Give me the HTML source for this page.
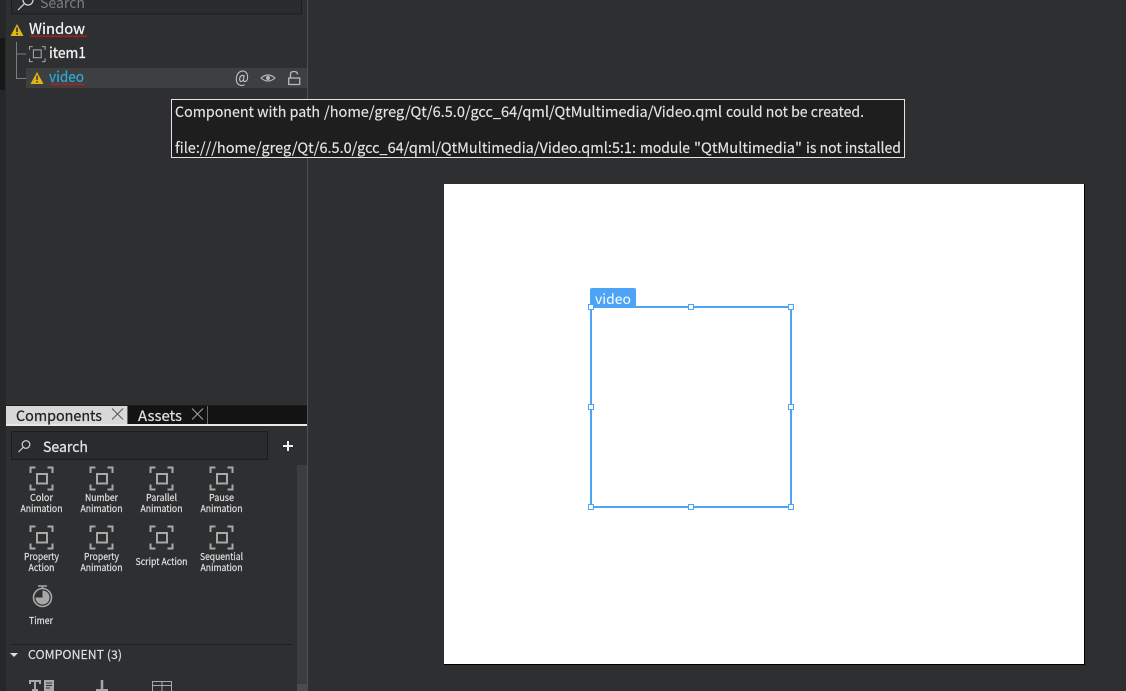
<!DOCTYPE html>
<html><head><meta charset="utf-8"><style>
html,body{margin:0;padding:0;background:#2e2f31;width:1126px;height:691px;overflow:hidden}
svg{display:block}
text{font-family:"Noto Sans CJK JP","Liberation Sans",sans-serif;white-space:pre}
.c{font-size:9.5px;fill:#e4e4e4;text-anchor:middle;stroke:#e4e4e4;stroke-width:.15px}
.b{stroke-width:.25px}
</style></head><body>
<svg width="1126" height="691" viewBox="0 0 1126 691" xmlns="http://www.w3.org/2000/svg">
<defs>
<g id="ic" fill="none" stroke="#a8a8a8" stroke-width="2">
<path d="M1 6.500V1H6M18 1H23V6.500M1 18V23H6M18 23H23V18"/>
<rect x="7.500" y="7.500" width="10" height="9.500" stroke-width="2"/>
</g>
<path id="warn" d="M6.500 0L13 12H0Z" fill="#e3b512"/>
</defs>
<rect width="1126" height="691" fill="#2e2f31"/>
<rect x="0" y="0" width="6" height="691" fill="#262728"/>
<rect x="0" y="38" width="5" height="52" fill="#171717"/>
<rect x="307" y="0" width="1" height="691" fill="#505153"/>

<!-- top search -->
<rect x="11.500" y="-10" width="290" height="24" fill="#2a2b2d" stroke="#1c1d1e"/>
<circle cx="28" cy="0" r="5" fill="none" stroke="#dcdcdc" stroke-width="1.200"/>
<path d="M24 4L18 10" stroke="#dcdcdc" stroke-width="1.200"/>
<text x="40" y="8" font-size="14.500" fill="#7d7e80" textLength="45" lengthAdjust="spacingAndGlyphs">Search</text>

<!-- tree -->
<rect x="26" y="68" width="281" height="20" fill="#3e3f41"/>
<use href="#warn" x="10.500" y="24"/><rect x="16.200" y="27.500" width="1.600" height="4.500" fill="#2e2f31"/><rect x="16.200" y="33" width="1.600" height="1.600" fill="#2e2f31"/>
<text x="29" y="34" font-size="15" fill="#f4f4f4" stroke="#f4f4f4" class="b" textLength="56" lengthAdjust="spacingAndGlyphs">Window</text>
<path d="M30 37l1.500 -1.500 1.500 1.500 1.500 -1.500 1.500 1.500 1.500 -1.500 1.500 1.500 1.500 -1.500 1.500 1.500 1.500 -1.500 1.500 1.500 1.500 -1.500 1.500 1.500 1.500 -1.500 1.500 1.500 1.500 -1.500 1.500 1.500 1.500 -1.500 1.500 1.500 1.500 -1.500 1.500 1.500 1.500 -1.500 1.500 1.500 1.500 -1.500 1.500 1.500 1.500 -1.500 1.500 1.500 1.500 -1.500 1.500 1.500 1.500 -1.500 1.500 1.500 1.500 -1.500 1.500 1.500 1.500 -1.500 1.500 1.500 1.500 -1.500 1.500 1.500 1.500 -1.500 1.500 1.500" fill="none" stroke="#c41c1c" stroke-width=".8"/>
<path d="M16.500 42V78.500H26M16.500 54H26" fill="none" stroke="#7c7d7f" stroke-width="1"/>
<g transform="translate(29.500,46) scale(.65)"><path d="M0 6V1H5M19 1H24V6M0 19V24H5M19 24H24V19" fill="none" stroke="#a8a8a8" stroke-width="1.600"/><rect x="6" y="6" width="12" height="12" fill="none" stroke="#a8a8a8" stroke-width="1.600"/></g>
<text x="49" y="58" font-size="15" fill="#f4f4f4" stroke="#f4f4f4" class="b" textLength="37" lengthAdjust="spacingAndGlyphs">item1</text>
<use href="#warn" x="30.500" y="72"/><rect x="36.200" y="75.500" width="1.600" height="4.500" fill="#3e3f41"/><rect x="36.200" y="81" width="1.600" height="1.600" fill="#3e3f41"/>
<text x="49" y="82" font-size="15" fill="#2aa9d6" stroke="#2aa9d6" class="b" textLength="35" lengthAdjust="spacingAndGlyphs">video</text>
<path d="M50 85l1.500 -1.500 1.500 1.500 1.500 -1.500 1.500 1.500 1.500 -1.500 1.500 1.500 1.500 -1.500 1.500 1.500 1.500 -1.500 1.500 1.500 1.500 -1.500 1.500 1.500 1.500 -1.500 1.500 1.500 1.500 -1.500 1.500 1.500 1.500 -1.500 1.500 1.500 1.500 -1.500 1.500 1.500 1.500 -1.500 1.500 1.500 1.500 -1.500 1.500" fill="none" stroke="#c41c1c" stroke-width=".8"/>
<text x="235" y="83" font-size="17" fill="#c8c8c8" textLength="14" lengthAdjust="spacingAndGlyphs">@</text>
<path d="M261 78Q268 72 275 78Q268 84 261 78Z" fill="none" stroke="#b8b8b8" stroke-width="1.100"/><circle cx="268" cy="78" r="2" fill="#b8b8b8"/>
<path d="M290.500 78V74Q290.500 71.500 294 71.500Q297.500 71.500 297.500 74.500" fill="none" stroke="#b8b8b8" stroke-width="1.300"/><rect x="288.700" y="78" width="11" height="6.500" fill="none" stroke="#b8b8b8" stroke-width="1.300"/>

<!-- tab bar -->
<rect x="6" y="405" width="301" height="1" fill="#1c1d1e"/>
<rect x="128" y="406" width="179" height="18" fill="#131314"/>
<rect x="6" y="406" width="121" height="18" fill="#d8d8d8"/>
<rect x="127" y="406" width="1" height="18" fill="#6a6a6a"/>
<rect x="207" y="406" width="1" height="18" fill="#6a6a6a"/>
<rect x="6" y="424" width="301" height="2" fill="#e8e8e8"/>
<text x="16" y="421" font-size="14.500" fill="#222" stroke="#222" class="b" textLength="86" lengthAdjust="spacingAndGlyphs">Components</text>
<path d="M112 408.500L123 419.500M123 408.500L112 419.500" stroke="#555" stroke-width="1"/>
<text x="138" y="421" font-size="14.500" fill="#dcdcdc" stroke="#dcdcdc" class="b" textLength="44" lengthAdjust="spacingAndGlyphs">Assets</text>
<path d="M192 408.500L203 419.500M203 408.500L192 419.500" stroke="#a0a0a0" stroke-width="1"/>

<!-- comp search -->
<rect x="11.500" y="431.500" width="256" height="28" fill="#2a2b2d" stroke="#1c1d1e"/>
<circle cx="26" cy="444.500" r="3.800" fill="none" stroke="#dcdcdc" stroke-width="1.100"/>
<path d="M23 447.500L18.500 452" stroke="#dcdcdc" stroke-width="1.100"/>
<text x="43" y="452" font-size="14.500" fill="#e6e6e6" stroke="#e6e6e6" class="b" textLength="45" lengthAdjust="spacingAndGlyphs">Search</text>
<path d="M283 446H293M288 441V451" stroke="#f2f2f2" stroke-width="2"/>

<!-- scrollbar -->
<rect x="297" y="465" width="10" height="226" fill="#3c3d3f"/>
<rect x="297" y="684" width="10" height="7" fill="#4a4b4d"/>

<!-- icons -->
<use href="#ic" x="29.500" y="466.500"/><use href="#ic" x="89.500" y="466.500"/><use href="#ic" x="149.500" y="466.500"/><use href="#ic" x="209.500" y="466.500"/>
<use href="#ic" x="29.500" y="525.500"/><use href="#ic" x="89.500" y="525.500"/><use href="#ic" x="149.500" y="525.500"/><use href="#ic" x="209.500" y="525.500"/>
<text class="c" x="41.500" y="501" textLength="23" lengthAdjust="spacingAndGlyphs">Color</text>
<text class="c" x="41.500" y="512" textLength="42" lengthAdjust="spacingAndGlyphs">Animation</text>
<text class="c" x="101.500" y="501" textLength="33" lengthAdjust="spacingAndGlyphs">Number</text>
<text class="c" x="101.500" y="512" textLength="42" lengthAdjust="spacingAndGlyphs">Animation</text>
<text class="c" x="161.500" y="501" textLength="31" lengthAdjust="spacingAndGlyphs">Parallel</text>
<text class="c" x="161.500" y="512" textLength="42" lengthAdjust="spacingAndGlyphs">Animation</text>
<text class="c" x="221.500" y="501" textLength="25" lengthAdjust="spacingAndGlyphs">Pause</text>
<text class="c" x="221.500" y="512" textLength="42" lengthAdjust="spacingAndGlyphs">Animation</text>
<text class="c" x="41.500" y="560" textLength="35" lengthAdjust="spacingAndGlyphs">Property</text>
<text class="c" x="41.500" y="571" textLength="26" lengthAdjust="spacingAndGlyphs">Action</text>
<text class="c" x="101.500" y="560" textLength="35" lengthAdjust="spacingAndGlyphs">Property</text>
<text class="c" x="101.500" y="571" textLength="42" lengthAdjust="spacingAndGlyphs">Animation</text>
<text class="c" x="161.500" y="565" textLength="52" lengthAdjust="spacingAndGlyphs">Script Action</text>
<text class="c" x="221.500" y="560" textLength="43" lengthAdjust="spacingAndGlyphs">Sequential</text>
<text class="c" x="221.500" y="571" textLength="42" lengthAdjust="spacingAndGlyphs">Animation</text>

<!-- timer -->
<path d="M38 586H47M42.500 586V588.500" stroke="#a8a8a8" stroke-width="1.500" fill="none"/>
<circle cx="42.500" cy="597.500" r="9" fill="none" stroke="#a8a8a8" stroke-width="1.600"/>
<path d="M42.500 597.500V590.500A7 7 0 1 1 35.500 597.500Z" fill="#a8a8a8"/>
<text class="c" x="41" y="624" textLength="24" lengthAdjust="spacingAndGlyphs">Timer</text>

<rect x="11" y="644" width="281" height="1" fill="#1d1e1f"/>
<path d="M10 653H18L14 657Z" fill="#e0e0e0"/>
<text x="28" y="659" font-size="12" fill="#e0e0e0" stroke="#e0e0e0" stroke-width=".15" textLength="94" lengthAdjust="spacingAndGlyphs">COMPONENT (3)</text>

<!-- bottom icons -->
<path d="M30 684V681H40V684M35 681V690M32 690H38" fill="none" stroke="#a8a8a8" stroke-width="2"/>
<rect x="44" y="680" width="10" height="11" fill="#a8a8a8"/>
<path d="M46 683H52M46 685.500H52M46 688H50" stroke="#2e2f31" stroke-width="1"/>
<path d="M102 680V689" stroke="#a8a8a8" stroke-width="2.500"/><path d="M96 690.500H108" stroke="#a8a8a8" stroke-width="3"/>
<path d="M152.500 691V681.500H171.500V691M152.500 685.500H171.500M162 681.500V691" fill="none" stroke="#a8a8a8" stroke-width="1"/>

<!-- canvas -->
<rect x="444" y="184" width="640" height="480" fill="#fff"/>
<path d="M444 664.500H1084.500V184" fill="none" stroke="#000" stroke-width="1"/>
<rect x="590" y="288" width="46" height="19" rx="2" fill="#4da3f5"/>
<text x="595" y="304" font-size="14" fill="#fff" textLength="36" lengthAdjust="spacingAndGlyphs">video</text>
<rect x="591" y="307" width="200" height="200" fill="none" stroke="#4da3f5" stroke-width="2"/>
<g fill="#fff" stroke="#4da3f5" stroke-width="1">
<rect x="588.500" y="304.500" width="5" height="5"/><rect x="688.500" y="304.500" width="5" height="5"/><rect x="788.500" y="304.500" width="5" height="5"/>
<rect x="588.500" y="404.500" width="5" height="5"/><rect x="788.500" y="404.500" width="5" height="5"/>
<rect x="588.500" y="504.500" width="5" height="5"/><rect x="688.500" y="504.500" width="5" height="5"/><rect x="788.500" y="504.500" width="5" height="5"/>
</g>

<!-- tooltip -->
<rect x="171.500" y="99.500" width="733" height="58" fill="#1e1e1e" stroke="#e4e4e4" stroke-width="1"/>
<g font-size="14.500" fill="#e4e4e4" stroke="#e4e4e4" stroke-width=".15">
<text x="175" y="117" textLength="145" lengthAdjust="spacingAndGlyphs">Component with path</text>
<text x="324" y="117" textLength="398" lengthAdjust="spacingAndGlyphs">/home/greg/Qt/6.5.0/gcc_64/qml/QtMultimedia/Video.qml</text>
<text x="726" y="117" textLength="138" lengthAdjust="spacingAndGlyphs">could not be created.</text>
<text x="175" y="153" textLength="461" lengthAdjust="spacingAndGlyphs">file:///home/greg/Qt/6.5.0/gcc_64/qml/QtMultimedia/Video.qml:5:1:</text>
<text x="640" y="153" textLength="50" lengthAdjust="spacingAndGlyphs">module</text>
<text x="694" y="153" textLength="108" lengthAdjust="spacingAndGlyphs">"QtMultimedia"</text>
<text x="806" y="153" textLength="95" lengthAdjust="spacingAndGlyphs">is not installed</text>
</g>
</svg>
</body></html>
